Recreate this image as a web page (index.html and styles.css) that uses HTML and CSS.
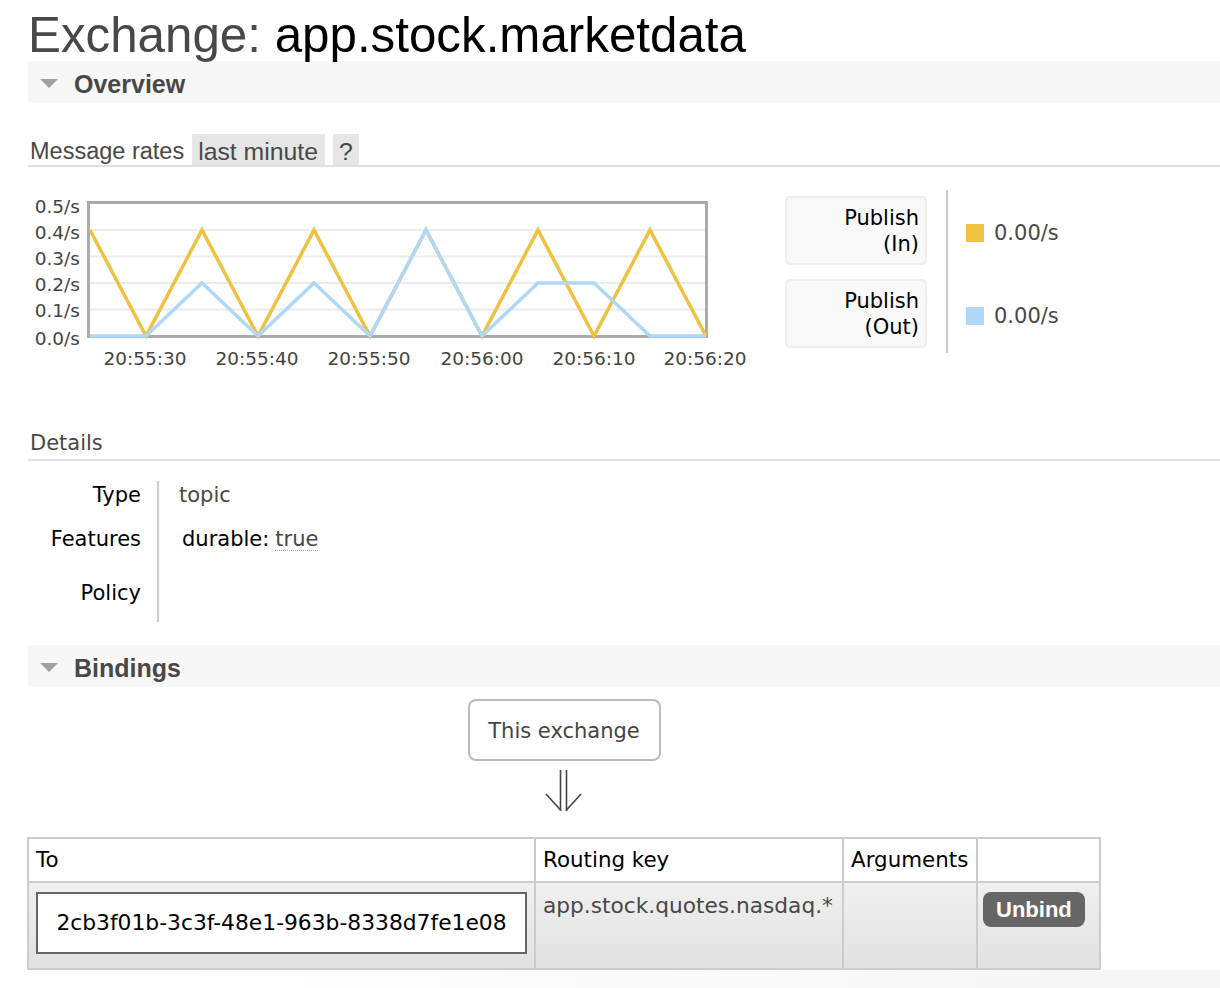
FILE: index.html
```html
<!DOCTYPE html>
<html>
<head>
<meta charset="utf-8">
<title>Exchange: app.stock.marketdata</title>
<link rel="stylesheet" href="styles.css">
</head>
<body>
<div class="page">
  <h1 class="title"><span class="lbl">Exchange:</span> app.stock.marketdata</h1>

  <div class="sect"><span class="tri"></span>Overview</div>

  <div class="rates">
    <span class="rates-lbl">Message rates</span>
    <span class="pill">last minute</span>
    <span class="pill q">?</span>
  </div>

  <div class="chart-row">
    <svg class="chart" width="740" height="180" viewBox="0 0 740 180">
      <g class="grid">
        <line x1="62" y1="119.5" x2="677" y2="119.5"/>
        <line x1="62" y1="93" x2="677" y2="93"/>
        <line x1="62" y1="66.5" x2="677" y2="66.5"/>
        <line x1="62" y1="40" x2="677" y2="40"/>
      </g>
      <rect class="frame" x="60.5" y="12.5" width="618" height="134"/>
      <polyline class="s-in" points="62,40 118,146 174,40 230,146 286,40 342,146 398,40 454,146 510,40 566,146 622,40 678,146"/>
      <polyline class="s-out" points="62,146 118,146 174,93 230,146 286,93 342,146 398,40 454,146 510,93 566,93 622,146 678,146"/>
      <g class="ylab">
        <text x="52" y="16">0.5/s</text>
        <text x="52" y="42">0.4/s</text>
        <text x="52" y="68">0.3/s</text>
        <text x="52" y="94">0.2/s</text>
        <text x="52" y="120">0.1/s</text>
        <text x="52" y="148">0.0/s</text>
      </g>
      <g class="xlab">
        <text x="117" y="168">20:55:30</text>
        <text x="229" y="168">20:55:40</text>
        <text x="341" y="168">20:55:50</text>
        <text x="454" y="168">20:56:00</text>
        <text x="566" y="168">20:56:10</text>
        <text x="677" y="168">20:56:20</text>
      </g>
    </svg>

    <div class="legend">
      <div class="legend-labels">
        <div class="lbox">Publish<br>(In)</div>
        <div class="lbox">Publish<br>(Out)</div>
      </div>
      <div class="legend-vals">
        <div class="lval"><span class="sw sw-in"></span>0.00/s</div>
        <div class="lval"><span class="sw sw-out"></span>0.00/s</div>
      </div>
    </div>
  </div>

  <h3 class="h3">Details</h3>

  <div class="facts">
    <div class="fk r1">Type</div>
    <div class="fv r1">topic</div>
    <div class="fk r2">Features</div>
    <div class="fv r2 feat">durable: <span class="dotted">true</span></div>
    <div class="fk r3">Policy</div>
    <div class="fv r3"></div>
  </div>

  <div class="sect sect-b"><span class="tri"></span>Bindings</div>

  <div class="bind">
    <div class="thisex">This exchange</div>
    <svg class="arrow" width="40" height="44" viewBox="0 0 40 44">
      <line x1="16.5" y1="1" x2="16.5" y2="42"/>
      <line x1="22.5" y1="1" x2="22.5" y2="42"/>
      <line x1="2" y1="25" x2="17" y2="41.5"/>
      <line x1="37" y1="25" x2="22" y2="41.5"/>
    </svg>
    <table class="blist">
      <colgroup>
        <col class="c1"><col class="c2"><col class="c3"><col class="c4">
      </colgroup>
      <thead>
        <tr><th>To</th><th>Routing key</th><th>Arguments</th><th></th></tr>
      </thead>
      <tbody>
        <tr>
          <td class="to"><div class="qbox">2cb3f01b-3c3f-48e1-963b-8338d7fe1e08</div></td>
          <td class="rk">app.stock.quotes.nasdaq.*</td>
          <td></td>
          <td class="act"><span class="btn">Unbind</span></td>
        </tr>
      </tbody>
    </table>
  </div>
  <div class="foot"></div>
</div>
</body>
</html>
```

FILE: styles.css
```css
html, body {
  margin: 0;
  padding: 0;
  background: #fff;
}
body {
  font-family: "DejaVu Sans", Verdana, sans-serif;
  font-size: 21px;
  color: #000;
  overflow: hidden;
}
.page {
  padding-left: 28px;
}
.title {
  margin: 0;
  padding-top: 10px;
  font: 400 49.3px/50px "Liberation Sans", Arial, sans-serif;
  color: #000;
  white-space: nowrap;
}
.title .lbl {
  color: #484848;
}
.sect {
  margin-top: 1px;
  height: 42px;
  box-sizing: border-box;
  padding-top: 3px;
  background: #f7f7f7;
  display: flex;
  align-items: center;
  font: 700 25px/30px "Liberation Sans", Arial, sans-serif;
  color: #484848;
}
.tri {
  width: 0;
  height: 0;
  border-left: 9px solid transparent;
  border-right: 9px solid transparent;
  border-top: 9px solid #a0a0a0;
  margin: 0 16px 0 12px;
}
.rates {
  margin-top: 31px;
  display: flex;
  gap: 8px;
  border-bottom: 2px solid #e0e0e0;
  font: 400 23.5px/27px "Liberation Sans", Arial, sans-serif;
  color: #484848;
}
.rates-lbl,
.pill {
  height: 31px;
  box-sizing: border-box;
  padding-top: 4px;
}
.rates-lbl {
  padding-left: 2px;
}
.pill {
  background: #e6e6e6;
  font-size: 24.8px;
  padding-left: 6px;
  padding-right: 7px;
}
.pill.q {
  padding-left: 6px;
  padding-right: 6px;
}
.chart-row {
  margin-top: 23px;
  display: flex;
  align-items: flex-start;
}
.chart {
  display: block;
  flex: none;
}
.chart .grid line {
  stroke: #ececec;
  stroke-width: 2;
}
.chart .frame {
  fill: none;
  stroke: #ababab;
  stroke-width: 3;
}
.chart polyline {
  fill: none;
  stroke-width: 3.5;
  stroke-linejoin: miter;
}
.chart .s-in {
  stroke: #edc240;
}
.chart .s-out {
  stroke: #afd8f8;
}
.chart text {
  font-family: "DejaVu Sans", Verdana, sans-serif;
  font-size: 18.5px;
  fill: #444;
  dominant-baseline: central;
}
.chart .ylab text {
  text-anchor: end;
}
.chart .xlab text {
  text-anchor: middle;
}
.legend {
  display: flex;
  margin-left: 17px;
}
.legend-labels {
  display: flex;
  flex-direction: column;
  gap: 14px;
  padding: 6px 19px 5px 0;
  border-right: 2px solid #cccccc;
}
.lbox {
  width: 142px;
  height: 69px;
  box-sizing: border-box;
  border: 2px solid #eeeeee;
  border-radius: 5px;
  background: #f9f9f9;
  text-align: right;
  line-height: 26px;
  padding: 7px 6px 0 0;
}
.legend-vals {
  display: flex;
  flex-direction: column;
  gap: 14px;
  padding: 8px 0 0 18px;
}
.lval {
  height: 69px;
  display: flex;
  align-items: center;
  color: #484848;
}
.sw {
  width: 18px;
  height: 18px;
  margin-right: 10px;
}
.sw-in {
  background: #edc240;
}
.sw-out {
  background: #afd8f8;
}
.h3 {
  margin: 61px 0 0 0;
  font-weight: 400;
  font-size: 21px;
  line-height: 25px;
  color: #484848;
  padding: 0 0 3px 2px;
  border-bottom: 2px solid #e4e4e4;
}
.facts {
  margin-top: 20px;
  display: grid;
  grid-template-columns: 131px auto;
  grid-template-rows: 28px 60px 53px;
  align-items: center;
}
.fk,
.fv {
  height: 100%;
  display: flex;
  align-items: center;
  box-sizing: border-box;
}
.fk {
  justify-content: flex-end;
  padding-right: 16px;
  border-right: 2px solid #cccccc;
}
.fv {
  padding-left: 20px;
  color: #484848;
}
.fv.feat {
  padding-left: 23px;
  color: #000;
}
.r3 {
  padding-bottom: 5px;
}
.dotted {
  color: #484848;
  border-bottom: 1px dotted #aaa;
  line-height: 22px;
  margin-left: 6px;
}
.sect-b {
  margin-top: 23px;
}
.bind {
  width: 1072px;
  display: flex;
  flex-direction: column;
  align-items: center;
}
.thisex {
  margin-top: 12px;
  width: 193px;
  height: 62px;
  box-sizing: border-box;
  border: 2px solid #bbbbbb;
  border-radius: 8px;
  text-align: center;
  line-height: 60px;
  color: #444;
}
.arrow {
  display: block;
  margin-top: 8px;
}
.arrow line {
  stroke: #444;
  stroke-width: 1.6;
}
.blist {
  margin-top: 24px;
  width: 1072px;
  border-collapse: collapse;
  table-layout: fixed;
}
.c1 { width: 507px; }
.c2 { width: 308px; }
.c3 { width: 134px; }
.c4 { width: 123px; }
.blist th,
.blist td {
  border: 2px solid #cccccc;
}
.blist th {
  text-align: left;
  font-weight: 400;
  font-size: 21.4px;
  height: 42px;
  padding: 0 7px;
  line-height: 42px;
  background: #fff;
  white-space: nowrap;
}
.blist td {
  vertical-align: top;
  background: linear-gradient(#f0f0f0, #e1e1e1);
  padding: 9px 7px 14px 7px;
}
.qbox {
  height: 62px;
  box-sizing: border-box;
  border: 2px solid #666;
  background: #fff;
  text-align: center;
  line-height: 58px;
  font-size: 21.8px;
  white-space: nowrap;
}
.blist td.rk {
  padding-top: 10px;
  line-height: 25px;
  font-size: 21.7px;
  color: #484848;
  white-space: nowrap;
}
.blist td.act {
  padding-left: 5px;
}
.btn {
  display: inline-block;
  background: #666;
  color: #fff;
  border-radius: 8px;
  font: 700 22px/35px "Liberation Sans", Arial, sans-serif;
  padding: 0 13px;
}
.foot {
  margin-left: -28px;
  height: 30px;
  background: linear-gradient(to right, #ffffff 12%, #f5f5f5 100%);
}
```
